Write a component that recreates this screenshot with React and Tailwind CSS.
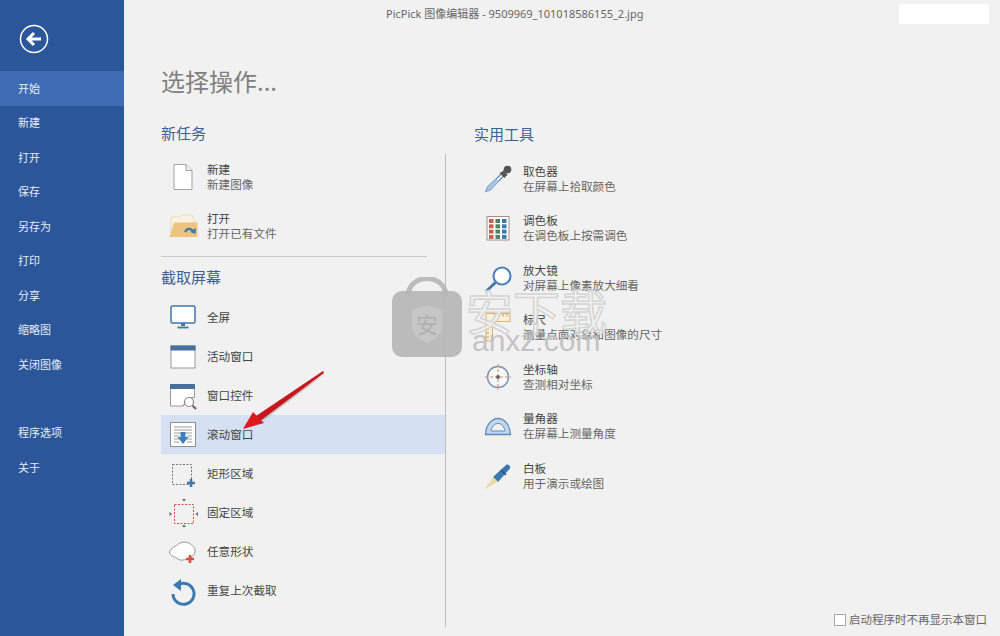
const FONT = "font-['Microsoft_YaHei','Noto_Sans_CJK_SC','Noto_Sans',sans-serif]";

const navTop = ["开始", "新建", "打开", "保存", "另存为", "打印", "分享", "缩略图", "关闭图像"];
const navBottom = ["程序选项", "关于"];

function Svg({ children, w = 30, h = 30 }) {
  return (
    <svg width={w} height={h} viewBox="0 0 30 30" fill="none">
      {children}
    </svg>
  );
}

const icons = {
  doc: (
    <Svg>
      <path d="M6 2.5h12l6 6v19H6z" fill="#fff" stroke="#a3a3a3" />
      <path d="M18 2.5v6h6" fill="#f1f1f1" stroke="#a3a3a3" />
    </Svg>
  ),
  folder: (
    <Svg>
      <path d="M3 6h9l2-2h10l2 4v14H3z" fill="#fbf3e2" stroke="#e3d3b0" strokeWidth="0.7" />
      <path d="M1.5 26L6 11.5h23.5V26z" fill="#edc47e" />
      <path d="M17 21c2-4 6-4 8-1" stroke="#3e78b2" strokeWidth="2.2" />
      <path d="M28 17l-.5 6-5.500-2z" fill="#3e78b2" />
    </Svg>
  ),
  monitor: (
    <Svg>
      <rect x="3" y="3" width="24" height="17" rx="1.5" fill="#fff" stroke="#3f78ab" strokeWidth="1.5" />
      <path d="M13 20h4v3h-4z" fill="#3f78ab" />
      <path d="M9.500 24.500h11" stroke="#3f78ab" strokeWidth="1.8" />
    </Svg>
  ),
  window: (
    <Svg>
      <rect x="3" y="4" width="24" height="22" fill="#fff" stroke="#999" />
      <rect x="2.500" y="3.500" width="25" height="5" fill="#47709f" />
    </Svg>
  ),
  control: (
    <Svg>
      <path d="M2.500 3.500h24v13h-3v7h-8v1.500h-13z" fill="#fff" stroke="#999" />
      <rect x="2" y="3" width="25" height="5" fill="#47709f" />
      <circle cx="21" cy="21" r="4.500" fill="#fff" stroke="#888" strokeWidth="1.200" />
      <path d="M24.500 24.500l3.500 3.500" stroke="#666" strokeWidth="2" />
    </Svg>
  ),
  scroll: (
    <Svg>
      <rect x="2.500" y="2.500" width="25" height="24" fill="#fff" stroke="#8f8f8f" />
      <path d="M6 7h18M6 10h18M6 13h18M6 16h5M19 16h5M6 19h5M19 19h5M6 22h5M19 22h5" stroke="#9a9a9a" />
      <path d="M12.500 12h5v5h3L15 24l-5.500-7h3z" fill="#3f7fbd" />
    </Svg>
  ),
  rect: (
    <Svg>
      <rect x="4.500" y="5.500" width="19" height="20" stroke="#777" strokeDasharray="2 1.500" />
      <path d="M21.700 20h2.600v2.700H27v2.600h-2.700V28h-2.600v-2.700H19v-2.600h2.700z" fill="#3e78b2" />
    </Svg>
  ),
  fixed: (
    <Svg>
      <rect x="6.500" y="6.500" width="19" height="19" stroke="#c9503f" strokeDasharray="2 1.500" />
      <path d="M14 1h4l-2 2.500zM14 29h4l-2-2.500zM1.500 14v4l2.500-2zM30 14v4l-2.500-2z" fill="#556b80" />
    </Svg>
  ),
  free: (
    <Svg>
      <path d="M1.500 15c1-4 7-6 9-8 4-3 9-2 12 0 3 2 5 4 4.500 8-1 4-4 6-8 7-4 1-6 2-9 0-3-2-8-3-8.500-7z" fill="#fff" stroke="#8a97a5" />
      <path d="M20.700 18h2.600v2.700H26v2.600h-2.700V26h-2.600v-2.700H18v-2.600h2.700z" fill="#d8503c" />
    </Svg>
  ),
  repeat: (
    <Svg>
      <path d="M8.500 10a10.500 10.500 0 1 1-3.500 8" stroke="#3e78b2" strokeWidth="3" />
      <path d="M13 3v12L5 9z" fill="#3e78b2" />
    </Svg>
  ),
  picker: (
    <Svg>
      <path d="M19 9.500l2 2L7 26l-4 1.500L4.500 23z" fill="#fff" stroke="#5b8dbd" strokeWidth="1.300" />
      <path d="M4.500 23L13 15l3 2-9 9-3.500 1.500z" fill="#a9c6e2" />
      <path d="M16.500 9l5 5 2-2.500 1.500-.5-5-5-.5 1.500z" fill="#555" />
      <circle cx="24.500" cy="5.500" r="3.800" fill="#555" />
    </Svg>
  ),
  palette: (
    <Svg>
      <rect x="4" y="3.500" width="22" height="23.500" fill="#fff" stroke="#a58f8a" />
      {[0, 1, 2].map((c) =>
        [0, 1, 2, 3].map((r) => (
          <rect
            key={`${c}-${r}`}
            x={6 + c * 6.500}
            y={6 + r * 5.300}
            width="4.500"
            height="4"
            fill={["#c6604c", "#4e7f68", "#3d7aa6"][c]}
          />
        ))
      )}
    </Svg>
  ),
  magnifier: (
    <Svg>
      <circle cx="19" cy="13" r="8.500" fill="#fff" stroke="#4a83bd" strokeWidth="2.200" />
      <path d="M12.500 19.500L3 28.500" stroke="#3f76ae" strokeWidth="2.800" />
    </Svg>
  ),
  ruler: (
    <Svg>
      <path d="M3 1.500h24v8H9.500V29H3z" fill="#f8efdc" stroke="#dcb36d" />
      <path d="M12 1.500v3M16 1.500v3M20 1.500v3M24 1.500v3M3 13h3M3 17h3M3 21h3M3 25h3" stroke="#c99a4d" />
    </Svg>
  ),
  axis: (
    <Svg>
      <circle cx="15" cy="15" r="10.500" fill="#f7f7f7" stroke="#7d94ad" strokeWidth="1.500" />
      <path d="M15 2v26M2 15h26" stroke="#d68a62" strokeDasharray="3 2" />
      <circle cx="15" cy="15" r="2" fill="#666" />
    </Svg>
  ),
  protractor: (
    <Svg>
      <path d="M2.500 23.500C3 14 8.500 7.500 15 7.500S27 14 27.500 23.500z" fill="#c3d6ea" stroke="#5b8dbd" strokeWidth="1.300" />
      <path d="M8 20c.5-4 3.500-7.500 7-7.500s6.500 3.500 7 7.500z" fill="#f1f1f1" stroke="#5b8dbd" />
    </Svg>
  ),
  pen: (
    <Svg>
      <path d="M10 16L23 4c2-1.500 5 1 4 3.500L15 21z" fill="#3e78b2" />
      <path d="M10 16l5 5-5.500 2.500-2.500-2.500z" fill="#e9d9a8" />
      <path d="M7 21l2.500 2.500L2 28z" fill="#e8d48f" />
      <path d="M18 9l5 5" stroke="#1f4f80" strokeWidth="1.200" />
    </Svg>
  ),
};

const tasks = [
  { icon: "doc", name: "新建", sub: "新建图像" },
  { icon: "folder", name: "打开", sub: "打开已有文件" },
];

const captures = [
  { icon: "monitor", name: "全屏" },
  { icon: "window", name: "活动窗口" },
  { icon: "control", name: "窗口控件" },
  { icon: "scroll", name: "滚动窗口", active: true },
  { icon: "rect", name: "矩形区域" },
  { icon: "fixed", name: "固定区域" },
  { icon: "free", name: "任意形状" },
  { icon: "repeat", name: "重复上次截取" },
];

const tools = [
  { icon: "picker", name: "取色器", sub: "在屏幕上拾取颜色" },
  { icon: "palette", name: "调色板", sub: "在调色板上按需调色" },
  { icon: "magnifier", name: "放大镜", sub: "对屏幕上像素放大细看" },
  { icon: "ruler", name: "标尺", sub: "测量点面对象和图像的尺寸" },
  { icon: "axis", name: "坐标轴", sub: "查测相对坐标" },
  { icon: "protractor", name: "量角器", sub: "在屏幕上测量角度" },
  { icon: "pen", name: "白板", sub: "用于演示或绘图" },
];

function NavItem({ label, active }) {
  return (
    <div className={`h-[34.5px] pl-[18px] pb-[1px] flex items-center text-[11px] text-[#e6ecf5] ${active ? "bg-[#3e6cb4]" : ""}`}>
      {label}
    </div>
  );
}

function TextBlock({ name, sub }) {
  return (
    <div className="text-[11.6px] leading-[15px]">
      <div className="text-[#444]">{name}</div>
      {sub && <div className="text-[#666]">{sub}</div>}
    </div>
  );
}

export default function App() {
  return (
    <div className={`${FONT} relative w-[1000px] h-[636px] overflow-hidden flex bg-[#f1f1f1]`}>
      <aside className="w-[124px] shrink-0 bg-[#2b579a] pt-[24px]">
        <svg className="ml-[19px] mb-[17px]" width="30" height="30" viewBox="0 0 30 30" fill="none">
          <circle cx="15" cy="15" r="13.500" stroke="#fff" strokeWidth="1.500" />
          <path d="M22 15H10M15 9l-6 6 6 6" stroke="#fff" strokeWidth="3" />
        </svg>
        {navTop.map((label, i) => (
          <NavItem key={label} label={label} active={i === 0} />
        ))}
        <div className="h-[34px]" />
        {navBottom.map((label) => (
          <NavItem key={label} label={label} />
        ))}
      </aside>

      <main className="flex-1 flex flex-col">
        <div className="h-[28px] flex items-center pl-[262px] pr-[11px] text-[11px] text-[#666]">
          <span className="font-['Noto_Sans','Noto_Sans_CJK_SC',sans-serif]">PicPick 图像编辑器 - 9509969_101018586155_2.jpg</span>
          <div className="ml-auto w-[90px] h-[20px] bg-white" />
        </div>

        <h1 className="ml-[37px] mt-[36px] h-[34px] leading-[34px] text-[24px] font-normal text-[#808080]">选择操作...</h1>

        <div className="flex h-[32px] ml-[37px] mt-[24px]">
          <div className="w-[313px] text-[15px] leading-[21px] text-[#3f5f95]">新任务</div>
          <div className="text-[15px] leading-[23px] text-[#3f5f95]">实用工具</div>
        </div>

        <div className="flex h-[473px] ml-[37px]">
          <div className="w-[284px] shrink-0">
            <div className="flex flex-col gap-[3px]">
              {tasks.map((t) => (
                <div key={t.icon} className="h-[46px] flex items-center pl-[7px] gap-[9px]">
                  <div className="w-[30px] h-[30px]">{icons[t.icon]}</div>
                  <TextBlock name={t.name} sub={t.sub} />
                </div>
              ))}
            </div>
            <div className="mt-[7px] w-[266px] border-t border-[#c8c8c8]" />
            <div className="h-[41px] flex items-center text-[15px] text-[#3f5f95]">截取屏幕</div>
            {captures.map((c) => (
              <div key={c.icon} className={`h-[39px] flex items-center pl-[7px] gap-[9px] ${c.active ? "bg-[#d5e1f2]" : ""}`}>
                <div className="w-[30px] h-[30px]">{icons[c.icon]}</div>
                <TextBlock name={c.name} />
              </div>
            ))}
          </div>

          <div className="flex-1 flex flex-col border-l border-[#bdbdbd] pl-[28px]">
            {tools.map((t) => (
              <div key={t.icon} className="h-[49.5px] flex items-center pl-[9px] gap-[10px]">
                <div className="w-[30px] h-[30px]">{icons[t.icon]}</div>
                <TextBlock name={t.name} sub={t.sub} />
              </div>
            ))}
            <div className="mt-auto flex items-center justify-end gap-[3px] pr-[13px] text-[11.500px] leading-[15px] text-[#666]">
              <span className="w-[12px] h-[12px] border border-[#a8a8a8] bg-white" />
              启动程序时不再显示本窗口
            </div>
          </div>
        </div>
      </main>

      {/* watermark over the page */}
      <div className="absolute left-[392px] top-[277px] flex pointer-events-none">
        <svg width="70" height="80" viewBox="0 0 70 80" fill="none">
          <path d="M16 18C18 -4 52 -4 54 18" stroke="#b5b5b5" strokeWidth="5" opacity="0.9" />
          <rect y="14" width="70" height="66" rx="10" fill="#b5b5b5" opacity="0.9" />
          <path d="M20 33l15-5 15 5v17c0 8-8 13-15 16-7-3-15-8-15-16z" fill="#c6c6c6" />
          <text x="35" y="56" textAnchor="middle" fontSize="22" fill="#b0b0b0">安</text>
        </svg>
        <div className="ml-[4px] w-[150px]">
          <div className="text-[47px] leading-[52px] mt-[7px] whitespace-nowrap text-[#f6f6f6]/60 [-webkit-text-stroke:1.500px_#d4d4d4]">安下载</div>
          <div className="font-['Liberation_Sans',sans-serif] text-[30px] leading-[30px] mt-[-10px] ml-[6px] text-[#bdbdbd]/90">anxz.com</div>
        </div>
      </div>

      {/* red arrow annotation */}
      <svg className="absolute left-[235px] top-[365px] pointer-events-none" width="95" height="75" viewBox="0 0 95 75" fill="none">
        <path d="M90 9L28 56L24 52z" fill="#777" opacity="0.35" />
        <path d="M88 6L89 8L25 56L21 51z" fill="#c8161d" />
        <path d="M8 64L18 47L29 58z" fill="#dd1a20" />
      </svg>
    </div>
  );
}
